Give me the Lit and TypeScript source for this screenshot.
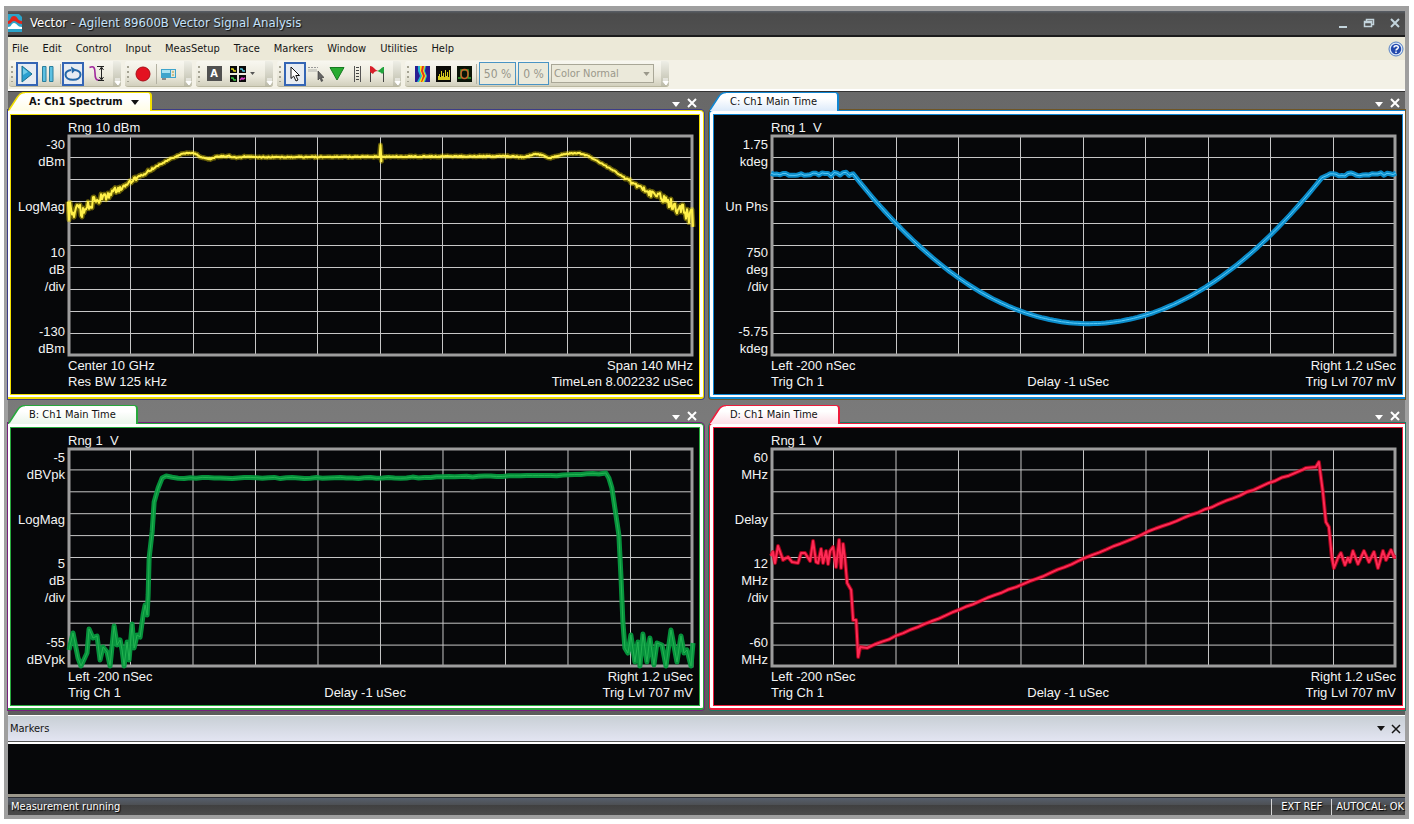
import { LitElement, html, svg, css } from "lit";
import { customElement, property } from "lit/decorators.js";

type Point = [number, number];

interface Trace {
  id: string;
  title: string;
  theme: string;
  active: boolean;
  range: string;
  scale: string[][];
  footer: string[][];
  points: Point[];
}

/* Small repeatable noise source, range -1..1 */
function noise(seed: number): () => number {
  let s = seed;
  return () => {
    s = (s * 16807) % 2147483647;
    return (s / 2147483647) * 2 - 1;
  };
}

function lerp(anchors: Point[], x: number): number {
  for (let i = 1; i < anchors.length; i++) {
    const [x0, y0] = anchors[i - 1];
    const [x1, y1] = anchors[i];
    if (x <= x1) return y0 + ((y1 - y0) * (x - x0)) / (x1 - x0);
  }
  return anchors[anchors.length - 1][1];
}

function spectrum(): Point[] {
  const a: Point[] = [
    [0, 77], [15, 73], [31, 64], [45, 56], [63, 46], [92, 29], [108, 21], [113, 19], [118, 18],
    [126, 18], [133, 22], [141, 24], [151, 21], [161, 21], [168, 23], [178, 21], [186, 22],
    [440, 21], [456, 22], [462, 20], [468, 19], [474, 20], [481, 23], [488, 21], [495, 19],
    [502, 18], [510, 18], [520, 21], [541, 33], [562, 46], [582, 58], [602, 67], [620, 79], [624, 82],
  ];
  const r = noise(71);
  const out: Point[] = [[0, 66], [1, 84]];
  for (let x = 2; x < 623; x += 1) {
    let amp = 0.6;
    if (x < 90) amp = 1 + 9 * Math.pow(1 - x / 90, 1.5);
    if (x > 552) amp = 1 + 8 * Math.pow((x - 552) / 72, 1.2);
    out.push([x, lerp(a, x) + r() * amp]);
    if (x === 311) out.push([312, 10], [313, 26]);
  }
  out.push([623, 74], [624, 91]);
  return out;
}

function phase(): Point[] {
  const r = noise(19);
  const out: Point[] = [];
  for (let x = 0; x < 82; x += 3) out.push([x, 39 + r() * (x > 50 ? 2 : 1.2)]);
  for (let x = 82; x <= 553; x += 4) {
    const d = (x - 317.5) / 235.5;
    out.push([x, 187 - 148.5 * d * d]);
  }
  for (let x = 555; x <= 624; x += 3) out.push([x, 39 + r() * 1.5]);
  return out;
}

function envelope(): Point[] {
  const r = noise(5);
  const rise: Point[] = [
    [1, 202], [5, 185], [10, 210], [13, 218], [19, 205], [21, 181], [25, 190], [29, 188], [32, 212],
    [35, 199], [39, 204], [42, 218], [46, 178], [49, 197], [52, 192], [54, 202], [56, 218], [59, 194],
    [61, 212], [64, 176], [66, 200], [69, 187], [72, 189], [75, 167], [77, 157], [79, 167], [80, 147],
    [81, 110], [84, 84], [86, 54], [90, 40], [94, 30], [98, 28],
  ];
  const top: Point[] = [];
  for (let x = 104; x < 536; x += 6) {
    top.push([x, lerp([[100, 30], [310, 30], [498, 27], [536, 25]], x) + r() * 0.7]);
  }
  const fall: Point[] = [
    [537, 25], [540, 30], [543, 40], [546, 60], [550, 87], [552, 127], [554, 174], [556, 200], [559, 205],
    [562, 187], [566, 214], [569, 194], [571, 218], [574, 186], [578, 214], [581, 190], [585, 217],
    [588, 195], [593, 197], [597, 218], [602, 182], [608, 214], [612, 188], [615, 205], [618, 202],
    [622, 218], [624, 195],
  ];
  return [...rise, ...top, ...fall];
}

function groupDelay(): Point[] {
  const r = noise(33);
  const head: Point[] = [
    [0, 108], [2, 104], [4, 115], [7, 98], [12, 112], [17, 109], [21, 114], [27, 115], [30, 105], [34, 105],
    [39, 113], [42, 93], [45, 114], [47, 115], [50, 101], [52, 115], [55, 103], [57, 116], [59, 103],
    [62, 99], [65, 119], [68, 92], [70, 120], [72, 96], [74, 112], [76, 135], [80, 142], [82, 172],
    [85, 172], [87, 209], [89, 199], [96, 200],
  ];
  const ramp: Point[] = [];
  for (let x = 104; x < 532; x += 7) {
    ramp.push([x, lerp([[96, 200], [209, 153], [279, 125], [376, 84], [437, 60], [532, 21]], x) + r() * 0.5]);
  }
  const tail: Point[] = [
    [534, 20], [544, 19], [547, 14], [551, 44], [554, 74], [557, 79], [560, 110], [562, 120], [566, 110],
    [569, 105], [573, 117], [576, 110], [578, 114], [581, 103], [586, 116], [592, 103], [597, 114],
    [602, 104], [606, 120], [611, 103], [614, 112], [619, 102], [622, 109], [624, 109],
  ];
  return [...head, ...ramp, ...tail];
}

const timeFooter = [
  ["Left -200 nSec", "", "Right 1.2 uSec"],
  ["Trig Ch 1", "Delay -1 uSec", "Trig Lvl 707 mV"],
];

const traces: Trace[] = [
  {
    id: "A", title: "A: Ch1 Spectrum", theme: "yellow", active: true, range: "Rng 10 dBm",
    scale: [["-30", "dBm"], ["LogMag"], ["10", "dB", "/div"], ["-130", "dBm"]],
    footer: [["Center 10 GHz", "", "Span 140 MHz"], ["Res BW 125 kHz", "", "TimeLen 8.002232 uSec"]],
    points: spectrum(),
  },
  {
    id: "C", title: "C: Ch1 Main Time", theme: "blue", active: false, range: "Rng 1  V",
    scale: [["1.75", "kdeg"], ["Un Phs"], ["750", "deg", "/div"], ["-5.75", "kdeg"]],
    footer: timeFooter, points: phase(),
  },
  {
    id: "B", title: "B: Ch1 Main Time", theme: "green", active: false, range: "Rng 1  V",
    scale: [["-5", "dBVpk"], ["LogMag"], ["5", "dB", "/div"], ["-55", "dBVpk"]],
    footer: timeFooter, points: envelope(),
  },
  {
    id: "D", title: "D: Ch1 Main Time", theme: "red", active: false, range: "Rng 1  V",
    scale: [["60", "MHz"], ["Delay"], ["12", "MHz", "/div"], ["-60", "MHz"]],
    footer: timeFooter, points: groupDelay(),
  },
];

const resetButton = css`
  button {
    margin: 0;
    padding: 0;
    border: 0;
    background: none;
    color: inherit;
    font: inherit;
    display: flex;
    align-items: center;
    justify-content: center;
  }
  svg {
    display: block;
  }
`;

const caret = html`<svg width="8" height="5" viewBox="0 0 8 5"><path d="M0 0h8L4 5z" fill="currentColor" /></svg>`;
const cross = html`<svg width="10" height="10" viewBox="0 0 10 10">
  <path d="M1 1l8 8M9 1L1 9" stroke="currentColor" stroke-width="2" />
</svg>`;

@customElement("trace-pane")
export class TracePane extends LitElement {
  @property({ attribute: false }) trace!: Trace;
  @property({ reflect: true }) theme = "yellow";
  @property({ reflect: true }) side = "left";

  static styles = [
    resetButton,
    css`
      :host {
        display: flex;
        flex-direction: column;
        min-width: 0;
        --line: #f2df00;
        --trace: #ffe500;
        --core: #fff04a;
        --ring: #3d3c86;
        --tint: #fffde6;
      }
      :host([theme="blue"]) {
        --line: #0f86d2;
        --trace: #0b92d4;
        --core: #5cccf8;
        --ring: #6e5524;
        --tint: #dceafa;
      }
      :host([theme="green"]) {
        --line: #27a83c;
        --trace: #069a3f;
        --core: #24b452;
        --ring: #76207c;
        --tint: #eaf5ea;
      }
      :host([theme="red"]) {
        --line: #ee1c3c;
        --trace: #d0021f;
        --core: #ff2a55;
        --ring: #1a7a63;
        --tint: #fbdfe6;
      }
      .head {
        position: relative;
        z-index: 1;
        display: flex;
        height: 19px;
        margin-bottom: -1px;
        color: #fff;
      }
      .tab {
        display: flex;
        color: #111;
        font-size: 11px;
      }
      .tab .label {
        display: flex;
        align-items: center;
        gap: 8px;
        box-sizing: border-box;
        height: 19px;
        padding: 0 20px 0 4px;
        border-top: 1px solid var(--line);
        border-right: 2px solid var(--line);
        border-top-right-radius: 4px;
        background: linear-gradient(#fff 30%, var(--tint));
        white-space: pre;
      }
      .tab.active .label {
        padding-right: 11px;
        font-weight: 700;
      }
      .slant stop:last-child {
        stop-color: var(--tint);
      }
      .slant .edge {
        stroke: var(--line);
      }
      .tools {
        display: flex;
        align-items: center;
        gap: 7px;
        margin-left: auto;
        padding: 2px 7px 0 0;
      }
      .tools .drop {
        padding-top: 4px;
      }
      :host([side="right"]) .tools {
        padding-right: 5px;
      }
      .frame {
        flex: 1;
        display: flex;
        padding: 3px 3px 2px;
        border: 1px solid var(--line);
        border-bottom-width: 2px;
        border-radius: 0 4px 3px 0;
        background: #fff;
        box-shadow: 0 0 0 1px var(--ring);
      }
      :host([side="left"]) .frame {
        padding-left: 2px;
        border-left: 0;
      }
      :host([side="right"]) .frame {
        padding-right: 2px;
        border-right: 0;
        border-radius: 4px 0 0 3px;
      }
      .screen {
        flex: 1;
        min-width: 0;
        display: grid;
        grid-template-columns: 54px 1fr;
        grid-template-rows: 15px 1fr auto;
        column-gap: 3px;
        padding: 5px 6px 4px 0;
        border: 1px solid var(--line);
        background: #060709;
        color: #f4f4f4;
        font: 13px/16px "Liberation Sans", Arial, sans-serif;
      }
      .range {
        grid-column: 2;
        white-space: pre;
      }
      .scale {
        display: flex;
        flex-direction: column;
        justify-content: space-between;
        padding: 1px 0;
        text-align: right;
        line-height: 17px;
        white-space: nowrap;
        direction: rtl;
      }
      .scale span {
        display: block;
        direction: ltr;
      }
      .plot {
        position: relative;
        margin-bottom: 2px;
        min-height: 120px;
      }
      .plot svg {
        position: absolute;
        width: 100%;
        height: 100%;
        overflow: visible;
      }
      .plot path,
      .plot rect,
      .plot polyline {
        fill: none;
        vector-effect: non-scaling-stroke;
      }
      .grid {
        stroke: #c6c6c6;
        stroke-width: 1px;
        shape-rendering: crispEdges;
      }
      .border {
        stroke: #9d9d9d;
        stroke-width: 3px;
      }
      .glow {
        stroke: var(--trace);
        stroke-width: 5px;
        stroke-opacity: 0.5;
        stroke-linejoin: round;
      }
      .core {
        stroke: var(--core);
        stroke-width: 2px;
        stroke-linejoin: round;
      }
      :host([theme="green"]) .core,
      :host([theme="blue"]) .core {
        stroke-width: 1px;
      }
      :host([theme="yellow"]) .glow {
        stroke-opacity: 0.4;
      }
      :host([theme="green"]) .glow,
      :host([theme="blue"]) .glow {
        stroke-opacity: 0.95;
      }
      :host([theme="red"]) .glow {
        stroke-width: 4px;
        stroke-opacity: 0.75;
      }
      .foot {
        grid-column: 2;
      }
      .foot div {
        display: grid;
        grid-template-columns: 41% auto 1fr;
        white-space: pre;
      }
      .foot span:last-child {
        text-align: right;
      }
    `,
  ];

  render() {
    const t = this.trace;
    const pts = t.points.map(([x, y]) => `${x},${y.toFixed(1)}`).join(" ");
    const lines: string[] = [];
    for (let i = 1; i < 10; i++) {
      lines.push(`M${i * 62.4} 0V219`, `M0 ${i * 21.9}H624`);
    }
    return html`
      <header class="head">
        <button class="tab ${t.active ? "active" : ""}">
          <svg class="slant" width="17" height="19" viewBox="0 0 17 19">
            <defs>
              <linearGradient id="g" x1="0" y1="0" x2="0" y2="1">
                <stop offset=".3" stop-color="#fff" />
                <stop offset="1" />
              </linearGradient>
            </defs>
            <path d="M17 .5C13 .5 11.500 2 9.500 5L1 18v1h16z" fill="url(#g)" />
            <path class="edge" d="M17 .5C13 .5 11.500 2 9.500 5L1 18" fill="none" stroke-width="1.500" />
          </svg>
          <span class="label">${t.title}${t.active ? caret : ""}</span>
        </button>
        <div class="tools">
          <button class="drop" aria-label="Pane menu">${caret}</button>
          <button aria-label="Close pane">${cross}</button>
        </div>
      </header>
      <div class="frame">
        <div class="screen">
          <div class="range">${t.range}</div>
          <div class="scale">
            ${t.scale.map((g) => html`<div>${g.map((s) => html`<span>${s}</span>`)}</div>`)}
          </div>
          <div class="plot">
            <svg viewBox="0 0 624 219" preserveAspectRatio="none">
              <path class="grid" d=${lines.join("")} />
              <rect class="border" x="1" y="1" width="622" height="217" />
              <polyline class="glow" points=${pts} />
              <polyline class="core" points=${pts} />
            </svg>
          </div>
          <div class="foot">
            ${t.footer.map((row) => html`<div>${row.map((s) => html`<span>${s}</span>`)}</div>`)}
          </div>
        </div>
      </div>
    `;
  }
}

const menus = ["File", "Edit", "Control", "Input", "MeasSetup", "Trace", "Markers", "Window", "Utilities", "Help"];

const icons = {
  app: svg`<svg width="14" height="18" viewBox="0 0 14 18">
    <path d="M0 0h11l3 3v15H0z" fill="#2ba3c9"/>
    <path d="M0 7C3 7 2 2 6 2s3 5 8 5v3c-5 0-5-3-8-3s-2 3-6 3z" fill="#e0261c"/>
    <path d="M0 13c4 0 3-4 6-4s3 4 8 4v2H0z" fill="#fff"/></svg>`,
  play: svg`<svg width="12" height="18" viewBox="0 0 12 18">
    <path d="M1 1l10 8L1 17z" fill="#2a9fd0" stroke="#17708f"/><path d="M2 3l5 4-5 3z" fill="#6fcbe8"/></svg>`,
  pause: svg`<svg width="12" height="16" viewBox="0 0 12 16">
    <path d="M.5.500h3.500v15H.500zM7.500.500H11v15H7.500z" fill="#5cc0e2" stroke="#2a7f9d"/></svg>`,
  loop: svg`<svg width="18" height="16" viewBox="0 0 18 16">
    <path d="M7 4C3.500 4.500 1.500 6 1.500 8.700c0 3 3 5 7.500 5s7.500-2 7.500-5C16.500 6 14.500 4.500 11 4" fill="none" stroke="#2468a8" stroke-width="2"/>
    <path d="M7 .500l5 3.200-4 3.800z" fill="#2468a8"/></svg>`,
  sweep: svg`<svg width="16" height="17" viewBox="0 0 16 17">
    <path d="M.500 2.500C5 .500 6 3 6 8s1 8 5 7" fill="none" stroke="#a0279c" stroke-width="1.600"/>
    <path d="M8 1.500h7M9 15.500h6M12.500 3v11M10.500 5l2-3 2 3M10.500 12l2 3 2-3" fill="none" stroke="#222"/></svg>`,
  record: svg`<svg width="16" height="16" viewBox="0 0 16 16"><circle cx="8" cy="8" r="7" fill="#e31221" stroke="#a80d17"/></svg>`,
  card: svg`<svg width="16" height="12" viewBox="0 0 16 12">
    <path d="M0 1h15v9H0z" fill="#3ea4cc"/><path d="M1 2h8v3H1z" fill="#a9e2f2"/><path d="M10 2h4v7h-4z" fill="#e2e6dc"/>
    <path d="M11 4h2M11 7h2" stroke="#b99a2e"/><path d="M1 10h4v2H1z" fill="#888"/></svg>`,
  grid: svg`<svg width="16" height="16" viewBox="0 0 16 16">
    <path d="M0 0h7v7H0zM9 0h7v7H9zM0 9h7v7H0zM9 9h7v7H9z" fill="#0a0a0a"/>
    <path d="M1 3h2l1 2h2" stroke="#e8dc22" stroke-width="1.500" fill="none"/><path d="M10 3h2l1 2h2" stroke="#52c4dc" stroke-width="1.500" fill="none"/>
    <path d="M1 12h2l1 2h2" stroke="#3fcc44" stroke-width="1.500" fill="none"/><path d="M10 14l2-2 1 1 2-1" stroke="#df3fce" stroke-width="1.500" fill="none"/></svg>`,
  pointer: svg`<svg width="10" height="16" viewBox="0 0 10 16">
    <path d="M1 1v11.500l2.700-2.400L6 15l2-1-2.200-4.500H9.500z" fill="#fff" stroke="#111"/></svg>`,
  markerPointer: svg`<svg width="16" height="16" viewBox="0 0 16 16">
    <path d="M0 1.500h10" stroke="#999" stroke-dasharray="2 1"/><path d="M0 3h9v3H0z" fill="#d0d0c8"/>
    <path d="M10 5v9l2-2 1.300 3.500 1.500-.700-1.500-3.300H16z" fill="#666" stroke="#333" stroke-width=".6"/></svg>`,
  down: svg`<svg width="16" height="14" viewBox="0 0 16 14"><path d="M1 .500h14L8 13z" fill="#27ab30" stroke="#167a20"/></svg>`,
  ruler: svg`<svg width="7" height="16" viewBox="0 0 7 16">
    <path d="M.500 0v16M6.500 0v16" stroke="#555"/><path d="M2 1.500h3M2 4.500h3M2 7.500h3M2 10.500h3M2 13.500h3" stroke="#444" stroke-width="1"/></svg>`,
  flags: svg`<svg width="16" height="16" viewBox="0 0 16 16">
    <path d="M1.500 1v15M14.500 1v15" stroke="#444"/><path d="M1 0c3 0 4 3 8 5-3 0-4 1-5 3L1 6z" fill="#d81f2a"/>
    <path d="M15 1c-3 0-3 3-7 4 2 1 4 1 5 3l2-2z" fill="#21a43c"/></svg>`,
  spectrogram: svg`<svg width="15" height="16" viewBox="0 0 15 16">
    <path d="M0 0h15v16H0z" fill="#2a1d93"/><path d="M3 0h8l-1 5 2 5-2 6H2l3-6-2-5z" fill="#1fb8d0"/>
    <path d="M5 0h5L9 5l2 5-2 6H4l3-6-2-5z" fill="#f3e321"/><path d="M7 0h2L8 5l2 5-3 6H6l2-6-2-5z" fill="#e5311d"/></svg>`,
  bars: svg`<svg width="15" height="16" viewBox="0 0 15 16">
    <path d="M0 0h15v16H0z" fill="#0b0b08"/><path d="M2 14v-4h1V8h1v3h1V5h1v5h1V7h1v4h1V4h1v6h1V6h1v5h1V4h1v10z" fill="#d8cc20"/></svg>`,
  persist: svg`<svg width="15" height="16" viewBox="0 0 15 16">
    <path d="M0 0h15v16H0z" fill="#0b1408"/><path d="M1 12h3V4h7v8h3" fill="none" stroke="#38a832" stroke-width="1.500"/>
    <path d="M4 8c0-6 7-6 7 0s-7 6-7 0" fill="none" stroke="#c8642a" stroke-width="1.500"/></svg>`,
  help: svg`<svg width="16" height="16" viewBox="0 0 16 16">
    <circle cx="8" cy="8" r="7" fill="#dbe7f7" stroke="#5580c4"/><circle cx="8" cy="8" r="5.200" fill="#2349ad"/>
    <path d="M6 6.500C6 4 10.300 4 10.300 6.500 10.300 8 8 8 8 9.500M8 10.500v1.500" fill="none" stroke="#fff" stroke-width="1.500"/></svg>`,
};

@customElement("app-root")
export class AppRoot extends LitElement {
  static styles = [
    resetButton,
    css`
      :host {
        display: flex;
        box-sizing: border-box;
        min-height: 100vh;
        padding: 6px 5px 5px 4px;
        background: #fff;
        color: #151515;
        font: 11px/16px "DejaVu Sans Condensed", Tahoma, sans-serif;
      }
      .window {
        flex: 1;
        min-width: 0;
        display: flex;
        flex-direction: column;
        border: 4px solid #9f9f9f;
        border-top-width: 5px;
      }
      .title {
        display: flex;
        align-items: center;
        gap: 8px;
        height: 24px;
        padding-right: 3px;
        border-bottom: 2px solid #1c1c1c;
        background: linear-gradient(#5a6068, #4b4b4b 12%, #505050);
        color: #fff;
        font-size: 13px;
      }
      .title h1 {
        flex: 1;
        margin: 0;
        font: inherit;
        text-shadow: 1px 1px 1px #111;
      }
      .title h1 span {
        color: #c4e2fb;
      }
      .title .controls {
        display: flex;
        gap: 12px;
        color: #c3d4dc;
      }
      .title .controls button {
        width: 14px;
      }
      .menubar {
        display: flex;
        align-items: center;
        height: 23px;
        padding-right: 1px;
        background: #ece9d8;
      }
      .menubar nav {
        flex: 1;
        display: flex;
        gap: 14px;
        padding-left: 4px;
      }
      .toolbar {
        display: flex;
        gap: 4px;
        height: 29px;
        box-sizing: border-box;
        padding: 1px 1px 2px;
        background: #f3f1e6;
      }
      .group {
        display: flex;
        align-items: center;
        box-sizing: border-box;
        padding-left: 2px;
        border-bottom: 1px solid #b9b7a0;
        border-radius: 3px;
        background: linear-gradient(#f8f7f0, #ebe9dc 60%, #d2d0bd);
      }
      .grip {
        width: 2px;
        height: 16px;
        margin: 0 3px 0 0;
        background: repeating-linear-gradient(#a5a393 0 2px, transparent 2px 5px);
      }
      .sep {
        width: 1px;
        height: 20px;
        margin: 0 1px 0 2px;
        background: #b3b1a2;
      }
      .tool {
        height: 24px;
        gap: 4px;
      }
      .tool.on {
        box-sizing: border-box;
        border: 2px solid #3465b5;
        background: #e7ecf2;
      }
      .w18 { width: 18px; }
      .w20 { width: 20px; }
      .w22 { width: 22px; }
      .w26 { width: 26px; }
      .w34 { width: 34px; }
      .letter {
        width: 15px;
        line-height: 15px;
        background: #505050;
        color: #fff;
        font-weight: 700;
      }
      .more {
        align-self: stretch;
        align-items: flex-end;
        width: 8px;
        margin-left: auto;
        padding-bottom: 1px;
        border-radius: 0 3px 3px 0;
        background: linear-gradient(#eeeee6, #bdbcaa);
        color: #fff;
      }
      .g1 { width: 112px; }
      .g2 { width: 67px; }
      .g3 { width: 77px; }
      .g4 { width: 124px; }
      .g5 { width: 264px; }
      .percent {
        box-sizing: border-box;
        width: 37px;
        height: 23px;
        margin: 0 1px;
        padding: 0;
        border: 1px solid #4a94c4;
        background: #ebe9da;
        color: #97968a;
        font: inherit;
        font-size: 12px;
        text-align: center;
      }
      .percent.small {
        width: 31px;
      }
      .mode {
        position: relative;
        display: flex;
        color: #9a988a;
      }
      .mode select {
        box-sizing: border-box;
        width: 103px;
        height: 19px;
        margin: 0 0 0 1px;
        padding: 0 0 0 2px;
        appearance: none;
        border: 1px solid #a9a797;
        border-radius: 0;
        background: #ebe9da;
        color: inherit;
        font: inherit;
        opacity: 1;
      }
      .mode svg {
        position: absolute;
        right: 4px;
        top: 8px;
      }
      .panes {
        flex: 1;
        display: grid;
        grid-template-columns: minmax(0, 1fr) minmax(0, 1fr);
        grid-template-rows: 307fr 305fr;
        gap: 6px 5px;
        padding: 1px 0 5px;
        border-top: 2px solid #fff;
        background: linear-gradient(#333 1px, #686868 1px, #7b7b7b 55%, #5c5c5c);
      }
      .markers header {
        display: flex;
        align-items: center;
        gap: 6px;
        height: 25px;
        padding: 0 4px 0 2px;
        border-top: 1px solid #fff;
        border-bottom: 1px solid #555;
        background: linear-gradient(#c8cfd5, #e3e5f2);
      }
      .markers h2 {
        flex: 1;
        margin: 0;
        font: inherit;
      }
      .markers .list {
        height: 50px;
        border-top: 2px solid #fff;
        border-bottom: 3px solid #9b978b;
        background: #060709;
      }
      .status {
        display: flex;
        align-items: center;
        height: 18px;
        border-top: 1px solid #2a2d35;
        box-sizing: border-box;
        padding-left: 3px;
        background: linear-gradient(#565e6b, #4d5054 40%, #404040 42%, #4b4b4b);
        color: #fff;
        text-shadow: 1px 1px 1px #000;
      }
      .status p {
        flex: 1;
        margin: 0;
      }
      .status span {
        padding: 0 9px;
        border-left: 1px solid #d5d5d5;
      }
      .status span:last-child {
        padding: 0 1px 0 4px;
      }
    `,
  ];

  private tool(label: string, icon: unknown, size: string, on = false) {
    return html`<button class="tool ${size} ${on ? "on" : ""}" aria-label=${label}>${icon}</button>`;
  }

  private more() {
    return html`<button class="more" aria-label="More buttons">
      <svg width="7" height="7" viewBox="0 0 7 7"><path d="M1 1h5M1 3h5v1L4 7 1.500 4z" stroke="#fff" fill="#fff" /></svg>
    </button>`;
  }

  render() {
    return html`
      <main class="window">
        <header class="title">
          ${icons.app}
          <h1>Vector - <span>Agilent 89600B Vector Signal Analysis</span></h1>
          <div class="controls">
            <button aria-label="Minimize">
              <svg width="12" height="12" viewBox="0 0 12 12"><path d="M2 10h8" stroke="currentColor" stroke-width="2" /></svg>
            </button>
            <button aria-label="Restore">
              <svg width="12" height="12" viewBox="0 0 12 12">
                <path d="M3.500 4V2.500h7v5H9M1.500 4.500h7v5h-7zM1.500 5.500h7" fill="none" stroke="currentColor" stroke-width="1.500" />
              </svg>
            </button>
            <button aria-label="Close">${cross}</button>
          </div>
        </header>
        <div class="menubar">
          <nav>${menus.map((m) => html`<button>${m}</button>`)}</nav>
          <button aria-label="About">${icons.help}</button>
        </div>
        <div class="toolbar">
          <div class="group g1">
            <i class="grip"></i>
            ${this.tool("Run", icons.play, "w22", true)} ${this.tool("Pause", icons.pause, "w20")}
            <i class="sep"></i>
            ${this.tool("Continuous", icons.loop, "w22", true)} ${this.tool("Sweep", icons.sweep, "w26")}
            ${this.more()}
          </div>
          <div class="group g2">
            <i class="grip"></i>
            ${this.tool("Record", icons.record, "w22")}
            <i class="sep"></i>
            ${this.tool("Playback", icons.card, "w22")} ${this.more()}
          </div>
          <div class="group g3">
            <i class="grip"></i>
            ${this.tool("Annotation", html`<span class="letter">A</span>`, "w22")}
            ${this.tool("Trace layout", [icons.grid, html`<svg width="5" height="3" viewBox="0 0 8 5"><path d="M0 0h8L4 5z" fill="#555" /></svg>`], "w34")}
            ${this.more()}
          </div>
          <div class="group g4">
            <i class="grip"></i>
            ${this.tool("Pointer", icons.pointer, "w22", true)} ${this.tool("Marker pointer", icons.markerPointer, "w20")}
            ${this.tool("Peak", icons.down, "w22")} ${this.tool("Ruler", icons.ruler, "w18")}
            ${this.tool("Limits", icons.flags, "w22")} ${this.more()}
          </div>
          <div class="group g5">
            <i class="grip"></i>
            ${this.tool("Spectrogram", icons.spectrogram, "w20")} ${this.tool("Cumulative history", icons.bars, "w22")}
            ${this.tool("Persistence", icons.persist, "w20")}
            <i class="sep"></i>
            <input class="percent" aria-label="Upper level" value="50 %" disabled />
            <input class="percent small" aria-label="Lower level" value="0 %" disabled />
            <label class="mode">
              <select aria-label="Color mode" disabled><option>Color Normal</option></select>
              <svg width="7" height="4" viewBox="0 0 8 5"><path d="M0 0h8L4 5z" fill="currentColor" /></svg>
            </label>
            ${this.more()}
          </div>
        </div>
        <section class="panes">
          ${traces.map(
            (t, i) => html`<trace-pane .trace=${t} theme=${t.theme} side=${i % 2 ? "right" : "left"}></trace-pane>`
          )}
        </section>
        <section class="markers">
          <header>
            <h2>Markers</h2>
            <button aria-label="Markers menu">${caret}</button>
            <button aria-label="Close markers">
              <svg width="10" height="10" viewBox="0 0 10 10"><path d="M1 1l8 8M9 1L1 9" stroke="currentColor" stroke-width="1.500" /></svg>
            </button>
          </header>
          <div class="list"></div>
        </section>
        <footer class="status">
          <p>Measurement running</p>
          <span>EXT REF</span><span>AUTOCAL: OK</span>
        </footer>
      </main>
    `;
  }
}
